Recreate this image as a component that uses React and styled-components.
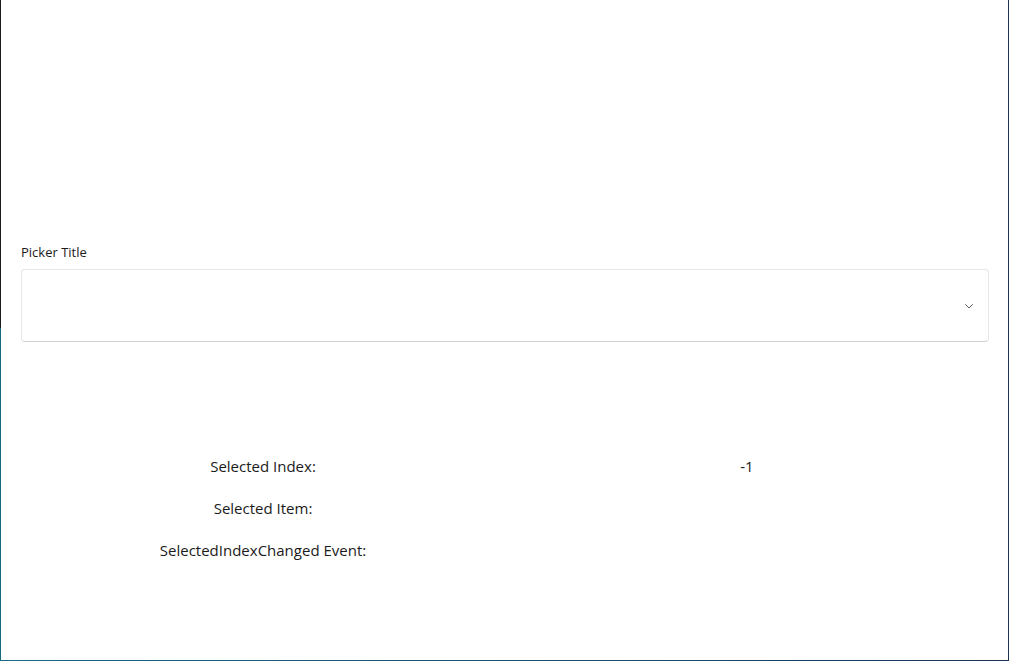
import React from 'react';
import styled, { createGlobalStyle } from 'styled-components';

const GlobalStyle = createGlobalStyle`
  html, body {
    margin: 0;
    padding: 0;
    background: #ffffff;
  }
  body {
    font-family: "Segoe UI", "Open Sans", "Liberation Sans", sans-serif;
    color: #1b1b1b;
  }
`;

const Frame = styled.div`
  width: 1010px;
  height: 661px;
  box-sizing: border-box;
  padding: 0 2px 1px 1px;
  background:
    linear-gradient(to bottom, #1c1c1c 0, #1c1c1c 328px, #166a7f 328px) left top / 1px 100% no-repeat,
    linear-gradient(to right, #1d3456 0, #1d3456 1px, #ffffff 1px) right top / 2px 100% no-repeat,
    linear-gradient(to right, #156b80 0%, #1a4d6c 60%, #1d3456 100%);
`;

const Window = styled.div`
  height: 100%;
  background: #ffffff;
  box-sizing: border-box;
  padding: 243px 19px 0 20px;
  display: flex;
  flex-direction: column;
`;

const FieldLabel = styled.div`
  font-size: 13px;
  line-height: 18px;
  color: #1b1b1b;
  margin-bottom: 8px;
`;

const Picker = styled.div`
  height: 73px;
  box-sizing: border-box;
  border: 1px solid #e6e6e6;
  border-bottom-color: #d2d2d2;
  border-radius: 4px;
  display: flex;
  align-items: center;
  justify-content: flex-end;
  padding-right: 14px;
`;

const Chevron = styled.svg`
  width: 10px;
  height: 10px;
  color: #5f5f5f;
`;

const Results = styled.div`
  margin-top: 113px;
  display: grid;
  grid-template-columns: 1fr 1fr;
  row-gap: 20px;
`;

const Cell = styled.div`
  text-align: center;
  font-size: 15px;
  line-height: 22px;
  color: #1b1b1b;
`;

export default function App() {
  const rows = [
    ['Selected Index:', '-1'],
    ['Selected Item:', ''],
    ['SelectedIndexChanged Event:', ''],
  ];
  return (
    <>
      <GlobalStyle />
      <Frame>
        <Window>
          <FieldLabel>Picker Title</FieldLabel>
          <Picker>
            <Chevron viewBox="0 0 10 10" fill="none">
              <path d="M1.5 3.5 L5 7 L8.5 3.5" stroke="currentColor" strokeWidth="1" strokeLinecap="round" strokeLinejoin="round" />
            </Chevron>
          </Picker>
          <Results>
            {rows.map(([label, value]) => (
              <React.Fragment key={label}>
                <Cell>{label}</Cell>
                <Cell>{value}</Cell>
              </React.Fragment>
            ))}
          </Results>
        </Window>
      </Frame>
    </>
  );
}
